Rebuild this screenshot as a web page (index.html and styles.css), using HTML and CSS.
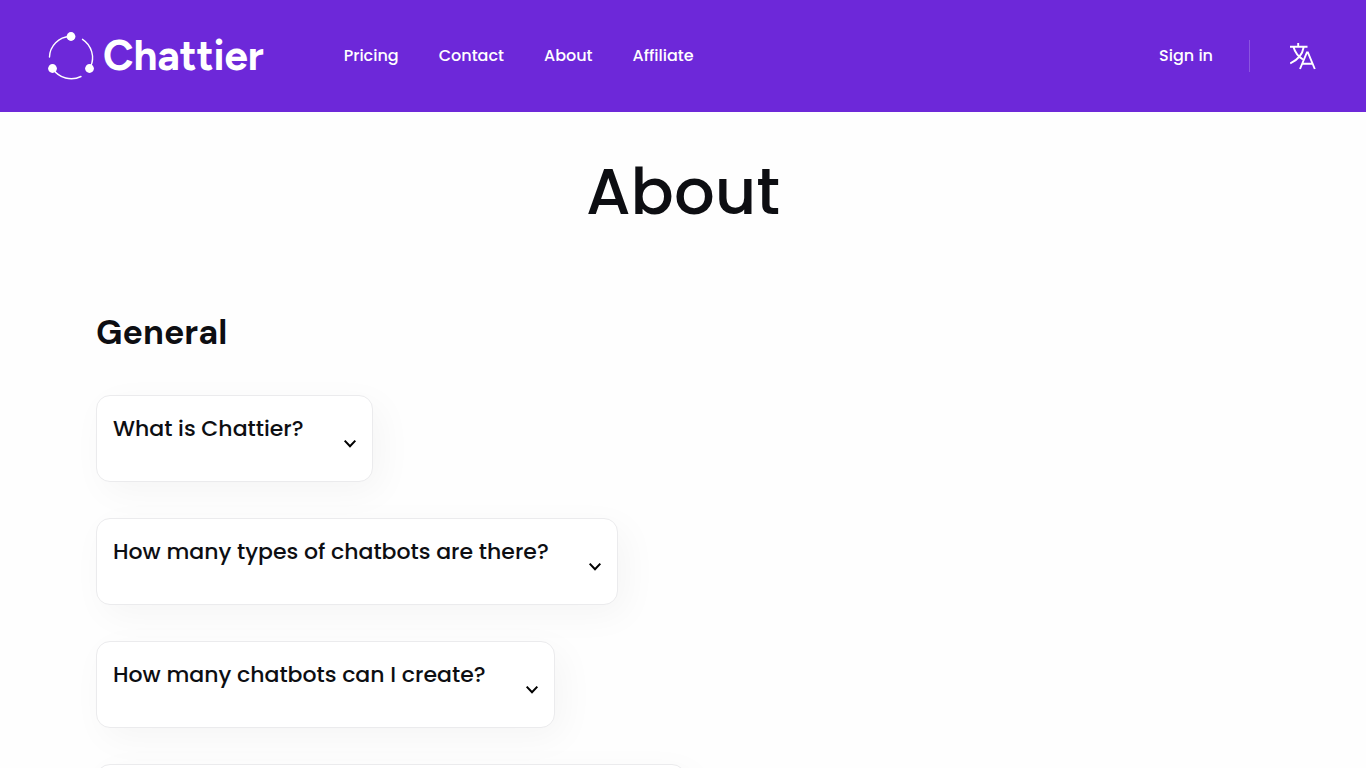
FILE: index.html
```html
<!DOCTYPE html>
<html lang="en">
<head>
  <meta charset="UTF-8" />
  <meta name="viewport" content="width=device-width, initial-scale=1.0" />
  <title>About - Chattier</title>
  <link rel="stylesheet" href="styles.css">
</head>
<body>
  <header class="header">
    <a href="#" class="logo">
      <svg class="logo-mark" viewBox="0 0 48 50" aria-hidden="true">
        <g fill="none" stroke="#fff" stroke-width="1.4" stroke-linecap="round">
          <path d="M1.5 26A21 21 0 0 1 22 5.5" />
          <path d="M34.5 8.3A22 22 0 0 1 42.5 36" />
          <path d="M5 38A22 22 0 0 0 33 45.5" />
        </g>
        <g fill="#fff">
          <circle cx="23" cy="5.5" r="4.4" />
          <circle cx="4.5" cy="37.5" r="4.4" />
          <circle cx="41.5" cy="37.5" r="4.4" />
        </g>
      </svg>
      <span class="logo-text">Chattier</span>
    </a>
    <nav class="nav">
      <a href="#">Pricing</a>
      <a href="#">Contact</a>
      <a href="#">About</a>
      <a href="#">Affiliate</a>
    </nav>
    <div class="account">
      <a href="#" class="sign-in">Sign in</a>
      <button type="button" class="language" aria-label="Change language">
        <svg viewBox="0 0 28 28" aria-hidden="true" fill="none" stroke="#fff" stroke-width="1.9">
          <path d="M0 4.8H17.5M8.2 1V4.8M3.5 5C5 10.5 9 15 13 17.5M13.7 5C12.5 12.5 6.5 18.5 0.2 21.5" />
          <path d="M10 27L16.9 10.5H17.9L24.8 27M12.2 21.8H22.6" />
        </svg>
      </button>
    </div>
  </header>

  <main class="page">
    <h1>About</h1>

    <section class="faq">
      <h2>General</h2>

      <details class="card">
        <summary>
          <span class="question">What is Chattier?</span>
          <svg class="chevron" viewBox="0 0 14 14" aria-hidden="true"><path d="M1.7 3.6L7 9.3L12.3 3.6" /></svg>
        </summary>
      </details>

      <details class="card">
        <summary>
          <span class="question">How many types of chatbots are there?</span>
          <svg class="chevron" viewBox="0 0 14 14" aria-hidden="true"><path d="M1.7 3.6L7 9.3L12.3 3.6" /></svg>
        </summary>
      </details>

      <details class="card">
        <summary>
          <span class="question">How many chatbots can I create?</span>
          <svg class="chevron" viewBox="0 0 14 14" aria-hidden="true"><path d="M1.7 3.6L7 9.3L12.3 3.6" /></svg>
        </summary>
      </details>

      <details class="card">
        <summary>
          <span class="question">Can I add one chatbot to more than one site?</span>
          <svg class="chevron" viewBox="0 0 14 14" aria-hidden="true"><path d="M1.7 3.6L7 9.3L12.3 3.6" /></svg>
        </summary>
      </details>
    </section>
  </main>
</body>
</html>
```
FILE: styles.css
```css
* {
  box-sizing: border-box;
}
body {
  margin: 0;
  font-family: Poppins, Inter, sans-serif;
  font-size: 16px;
  font-weight: 500;
  color: #0d0e12;
  background-color: #fefefe;
}
a {
  color: #fff;
  text-decoration: none;
}

/* Header */
.header {
  display: flex;
  align-items: center;
  min-height: 112px;
  padding: 0 48px;
  background-color: #6d28d9;
}
.logo {
  display: flex;
  align-items: center;
  gap: 7px;
  margin-right: 80px;
}
.logo-mark {
  width: 48px;
  height: 50px;
}
.logo-text {
  font-family: Figtree, "DM Sans", Inter, sans-serif;
  font-size: 42px;
  font-weight: 700;
  line-height: 48px;
}
.nav {
  display: flex;
  gap: 40px;
  line-height: 24px;
}
.account {
  display: flex;
  align-items: center;
  margin-left: auto;
}
.sign-in {
  padding-right: 36px;
  line-height: 32px;
  border-right: 1px solid #8b54e1;
}
.language {
  width: 28px;
  height: 28px;
  margin-left: 40px;
  padding: 0;
  border: none;
  background: none;
  cursor: pointer;
}
.language svg {
  display: block;
}

/* Page */
.page {
  padding: 40px 96px;
}
h1 {
  margin: 0;
  font-size: 64px;
  font-weight: 500;
  line-height: 80px;
  text-align: center;
}
h2 {
  margin: 0;
  font-family: "DM Sans", Inter, sans-serif;
  font-size: 34px;
  font-weight: 700;
  line-height: 52px;
}
.faq {
  display: flex;
  flex-direction: column;
  align-items: flex-start;
  gap: 36px;
  padding-top: 75px;
}
.card {
  border: 1px solid #ebebed;
  border-radius: 14px;
  background-color: #fff;
  box-shadow: 8px 10px 36px rgba(0, 0, 0, 0.04);
}
.card summary {
  display: flex;
  align-items: center;
  gap: 39px;
  padding: 16px 15px 16px 16px;
  list-style: none;
  cursor: pointer;
}
.question {
  padding-bottom: 20px;
  font-size: 22px;
  line-height: 33px;
}
.chevron {
  width: 14px;
  height: 14px;
  margin-top: 10px;
  fill: none;
  stroke: #000;
  stroke-width: 2;
}
```
